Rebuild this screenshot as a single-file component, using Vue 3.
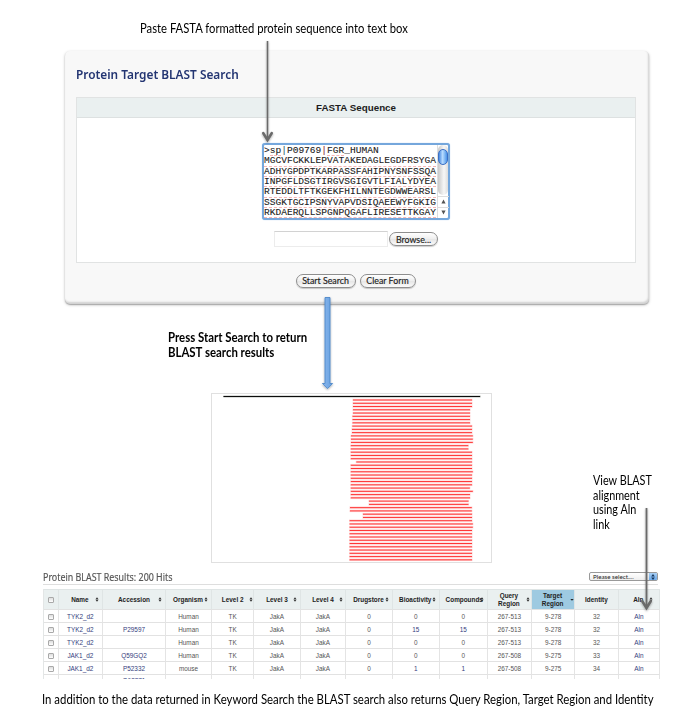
<script setup>
const sequence = [
  'MGCVFCKKLEPVATAKEDAGLEGDFRSYGA',
  'ADHYGPDPTKARPASSFAHIPNYSNFSSQA',
  'INPGFLDSGTIRGVSGIGVTLFIALYDYEA',
  'RTEDDLTFTKGEKFHILNNTEGDWWEARSL',
  'SSGKTGCIPSNYVAPVDSIQAEEWYFGKIG',
  'RKDAERQLLSPGNPQGAFLIRESETTKGAY',
]

// Runs of equal alignments: [count, start, end] in chart pixels
const runs = [
  [3, 142, 261], [2, 142, 259], [3, 141.5, 259], [1, 141.3, 261], [2, 141, 261],
  [3, 140, 261.8], [2, 139.8, 257.3], [3, 139.8, 261], [1, 145.3, 261],
  [2, 139.8, 261], [1, 139.8, 261.8], [4, 139.8, 261], [1, 139.8, 258.8],
  [1, 139.8, 261.8], [2, 139.8, 259], [2, 158, 257.5], [2, 139, 260.8],
  [2, 152, 261], [1, 138.6, 261], [2, 138.6, 261.8], [10, 138.6, 261],
]
const hits = runs
  .flatMap(([n, a, b]) => Array.from({ length: n }, () => ({ a, b })))
  .map((h, i) => ({ ...h, y: 7 + i * 3.262 }))

const columns = [
  { t: 'Name', s: 1 }, { t: 'Accession', s: 1 }, { t: 'Organism', s: 1, tight: 1 },
  { t: 'Level 2', s: 1 }, { t: 'Level 3', s: 1 }, { t: 'Level 4', s: 1 },
  { t: 'Drugstore', s: 1, tight: 1 }, { t: 'Bioactivity', s: 1, tight: 1 },
  { t: 'Compounds', s: 1, over: 1 }, { t: 'Query Region', s: 1 },
  { t: 'Target Region', s: 1, active: 1 }, { t: 'Identity' }, { t: 'Aln', s: 1 },
]
const links = [0, 1, 12]
const rows = [
  ['TYK2_d2', '', 'Human', 'TK', 'JakA', 'JakA', '0', '0', '0', '267-513', '9-278', '32', 'Aln'],
  ['TYK2_d2', 'P29597', 'Human', 'TK', 'JakA', 'JakA', '0', '15', '15', '267-513', '9-278', '32', 'Aln'],
  ['TYK2_d2', '', 'Human', 'TK', 'JakA', 'JakA', '0', '0', '0', '267-513', '9-278', '32', 'Aln'],
  ['JAK1_d2', 'Q59GQ2', 'Human', 'TK', 'JakA', 'JakA', '0', '0', '0', '267-508', '9-275', '33', 'Aln'],
  ['JAK1_d2', 'P52332', 'mouse', 'TK', 'JakA', 'JakA', '0', '1', '1', '267-508', '9-275', '34', 'Aln'],
  ['', 'Q62371', '', '', '', '', '', '', '', '', '', '', ''],
]
const isLink = (c, v) => links.includes(c) || ((c === 7 || c === 8) && v !== '0')
</script>

<template>
  <main class="page">
    <p class="note top-note"><span>Paste FASTA formatted protein sequence into text box</span></p>

    <section class="panel">
      <h1><span>Protein Target BLAST Search</span></h1>
      <div class="form-box">
        <div class="form-head">FASTA Sequence</div>
        <div class="form-body">
          <div class="textarea">
            <div class="lines">
              <div class="line"><span>&gt;<u>sp</u></span><i class="bar teal">|</i><span>P09769</span><i class="bar red">|</i><span><u>FGR</u>_HUMAN</span></div>
              <div v-for="s in sequence" :key="s" class="line"><u>{{ s }}</u></div>
            </div>
            <div class="scroll">
              <div class="track"><div class="thumb"></div></div>
              <svg class="steps" viewBox="0 0 11 22">
                <path d="M0 .5H11M0 11.5H11" stroke="#ddd" />
                <path d="M5.5 3.6 7.6 7.6H3.4ZM5.5 18.4 7.6 14.4H3.4Z" fill="#555" />
              </svg>
            </div>
          </div>
          <div class="file-row">
            <div class="file-field"></div>
            <button class="btn browse">Browse...</button>
          </div>
        </div>
      </div>
      <div class="actions">
        <button class="btn start">Start Search</button>
        <button class="btn clear">Clear Form</button>
      </div>
    </section>

    <p class="note press-note"><span>Press Start Search to return</span><span>BLAST search results</span></p>

    <div class="chart">
      <svg viewBox="0 0 281 170">
        <rect x="12" y="2.5" width="258" height="2" rx="1" fill="#b9bdb9" />
        <rect x="12.5" y="3" width="256.5" height="1" fill="#0c0c0c" />
        <g v-for="(h, i) in hits" :key="i">
          <rect :x="h.a - 0.6" :y="h.y - 1.2" :width="h.b - h.a + 1.2" height="2.4" fill="#ff4a4a" opacity=".22" />
          <rect :x="h.a" :y="h.y - 0.5" :width="h.b - h.a" height="1" fill="#ff3434" />
        </g>
      </svg>
    </div>

    <p class="note view-note"><span>View BLAST<br />alignment<br />using Aln<br />link</span></p>

    <section class="results">
      <header>
        <h2><span>Protein BLAST Results: 200 Hits</span></h2>
        <div class="select"><span>Please select....</span>
          <svg viewBox="0 0 8 8"><path d="M4 1 5.8 3.4H2.2ZM4 7 5.8 4.6H2.2Z" fill="#16365c" /></svg>
        </div>
      </header>
      <div class="table">
        <div class="tr head">
          <div class="td"><i class="check"></i></div>
          <div v-for="c in columns" :key="c.t" class="td" :class="{ sorted: c.active, tight: c.tight, over: c.over, plain: !c.s }">
            <span class="label">{{ c.t }}</span>
            <svg v-if="c.s" class="sort" viewBox="0 0 4 6">
              <path v-if="c.active" d="M0 2.4H4L2 4.6Z" fill="#222" />
              <path v-else d="M2 .4 3.8 2.7H.2ZM2 5.6 3.8 3.3H.2Z" fill="#333" />
            </svg>
          </div>
        </div>
        <div v-for="(r, i) in rows" :key="i" class="tr" :class="{ partial: !r[0] }">
          <div class="td"><i v-if="r[0]" class="check"></i></div>
          <div v-for="(v, c) in r" :key="c" class="td" :class="{ link: isLink(c, v) }">{{ v }}</div>
        </div>
      </div>
    </section>

    <p class="note bottom-note"><span>In addition to the data returned in Keyword Search the BLAST search also returns Query Region, Target Region and Identity</span></p>

    <svg class="arrows" viewBox="0 0 700 720">
      <defs>
        <filter id="soft" x="-200%" y="-10%" width="500%" height="120%">
          <feDropShadow dx="0" dy="1" stdDeviation="1" flood-opacity=".35" />
        </filter>
        <linearGradient id="blue"><stop offset="0" stop-color="#8ab8ee" /><stop offset="1" stop-color="#669fdf" /></linearGradient>
      </defs>
      <g fill="none" stroke="#6a6a6a" filter="url(#soft)">
        <path d="M267.5 41V139" stroke-width="1.6" />
        <path d="M263.3 133.2 267.5 140 271.7 133.2" stroke-width="2.6" stroke-linecap="round" />
        <path d="M646.5 508V607" stroke-width="1.8" />
        <path d="M642.3 601.2 646.5 608 650.7 601.2" stroke-width="2.6" stroke-linecap="round" />
      </g>
      <path d="M325 297.5H330V383.5H332.6L327.5 388.6 322.4 383.5H325Z" fill="url(#blue)" stroke="#4f88c8" stroke-width=".9" filter="url(#soft)" />
    </svg>
  </main>
</template>

<style>
body { margin: 0; background: #fff; }
</style>

<style scoped>
* { box-sizing: border-box; }
.page { position: relative; width: 700px; height: 720px; overflow: hidden; background: #fff; display: flex; flex-direction: column; font-family: "Liberation Sans", sans-serif; }
.note, h1, h2 { margin: 0; font-weight: 400; white-space: nowrap; }
.note { color: #000; font-family: Lato, sans-serif; font-size: 12.6px; line-height: 14.5px; }
.note span, h1 span, h2 span { display: inline-block; transform-origin: 0 50%; }
.top-note { height: 51px; padding: 22px 0 0 140px; }
.top-note span { transform: scaleX(.894); }
.panel { width: 584px; height: 253px; margin-left: 65px; padding: 14px 12px 0 11px; background: #f8f8f8; border-radius: 5px; box-shadow: 0 1px 3px rgba(0,0,0,.25), inset -1px -2px 2px rgba(0,0,0,.16), 0 1px 1px rgba(0,0,0,.2); }
h1 { height: 32px; font: 600 12.4px/20px "Noto Sans", "Open Sans", sans-serif; color: #233572; }
h1 span { transform: scaleX(.957); }
.form-box { width: 560px; height: 166px; border: 1px solid #e1e3e3; background: #fff; }
.form-head { height: 20px; background: #eaf0f0; border-bottom: 1px solid #dde1e1; text-align: center; font-size: 9.8px; font-weight: 700; line-height: 20px; color: #1c1c1c; }
.form-body { padding: 25px 0 0 185px; }
.textarea { width: 188px; height: 77px; display: flex; border: 2px solid #75a7dc; border-radius: 3px; box-shadow: 0 0 1px #8db9e6; background: #fff; }
.lines { width: 173px; padding-top: 1px; font: 9.56px/10.35px "Liberation Mono", monospace; color: #222; -webkit-text-stroke: .1px #222; }
.line { height: 10.35px; white-space: pre; }
.line u { display: inline-block; height: 10.3px; text-decoration: none; border-bottom: 1px dashed rgba(240,110,110,.5); }
.bar { font-style: normal; }
.bar.teal { color: #39808a; }
.bar.red { color: #a13b4c; }
.scroll { width: 11px; display: flex; flex-direction: column; justify-content: space-between; border-left: 1px solid #ddd; }
.track { height: 50px; padding-top: 4px; border-radius: 5px; background: linear-gradient(90deg, #c9c9c9, #f7f7f7 60%, #ddd); }
.thumb { width: 10px; height: 16px; border-radius: 5px; border: 1px solid #3b6fc4; background: linear-gradient(90deg, #4a8ae0, #b8dcff 45%, #4b94e8); }
.steps { width: 11px; height: 22px; }
.file-row { display: flex; align-items: center; margin: 11px 0 0 12px; gap: 1px; }
.file-field { width: 114px; height: 16px; border: 1px solid #ececec; border-top-color: #d2d2d2; background: #fff; }
.btn { height: 14px; padding: 0; border: 1px solid #8e8e8e; border-radius: 7px; background: linear-gradient(#fff, #eee 50%, #e6e6e6 52%, #fbfbfb); box-shadow: 0 1px 1px rgba(0,0,0,.2); font: 8.8px/11px Lato, "Open Sans", sans-serif; color: #222; white-space: nowrap; -webkit-text-stroke: .15px #222; }
.browse { width: 49px; }
.actions { display: flex; gap: 4px; padding: 10.5px 0 0 219.5px; }
.start { width: 60px; }
.clear { width: 56px; }
.press-note { height: 89px; padding: 27px 0 0 168px; font-weight: 700; }
.press-note span { display: block; width: max-content; transform: scaleX(.906); }
.chart { width: 281px; height: 170px; margin-left: 211px; border: 1px solid #e0e0e0; }
.chart svg { display: block; width: 281px; height: 170px; margin: -1px; }
.view-note { height: 64px; margin-top: -89px; margin-left: 593px; }
.view-note span { transform: scaleX(.86); }
.results { width: 617px; height: 108px; margin: 33px 0 0 43px; overflow: hidden; }
header { display: flex; justify-content: space-between; height: 14px; border-bottom: 1px solid #dedede; margin-right: 2px; }
h2 { width: 140px; font: 9.9px/13px "Noto Sans", sans-serif; color: #555; }
h2 span { transform: scaleX(.9); -webkit-text-stroke: .15px #555; }
.select { width: 69px; height: 9px; margin-top: 1px; display: flex; justify-content: space-between; border: 1px solid #999; border-radius: 2px; background: linear-gradient(#fff, #eee); font: 6.2px/7px Lato, sans-serif; color: #222; padding-left: 3px; overflow: hidden; }
.select svg { width: 8px; height: 8px; background: linear-gradient(#a9d0f5, #63a4e8); }
.table { margin-top: 4px; border-left: 1px solid #e3e6e6; font-size: 6.4px; color: #555; }
.tr { display: grid; grid-template-columns: 14.5px 44.7px 62.6px 46.4px 42px 46.6px 45.4px 46.6px 47px 48px 44.4px 43px 43.6px 41.2px; height: 13.05px; }
.td { display: flex; align-items: center; justify-content: center; border-right: 1px solid #e4e4e4; border-bottom: 1px solid #e2e2e2; min-width: 0; line-height: 8px; padding-top: 1px; }
.partial .td { align-items: flex-start; padding-top: 2px; line-height: 7px; }
.head { height: 21px; background: #eaf0f0; color: #222; font-weight: 700; }
.head .td { border-right-color: #dfe5e5; border-top: 1px solid #dfe5e5; text-align: center; gap: 6px; padding-left: 9px; line-height: 7.4px; padding-top: 0; }
.head .td:first-child { padding-left: 0; }
.head .td:nth-child(3) { gap: 8px; padding-left: 12px; }
.head .tight { gap: 1px; padding-left: 4px; }
.head .over { gap: 0; padding-left: 3px; }
.over .sort { margin-left: -3px; }
.head .plain { padding-left: 0; }
.head .sorted { background: #9ecae1; }
.head .td:nth-child(5), .head .td:nth-child(6), .head .td:nth-child(7) { gap: 5px; }
.label { max-width: 40px; white-space: nowrap; }
.td:nth-child(11) .label, .td:nth-child(12) .label { width: 23px; white-space: normal; }
.sort { width: 4px; height: 5px; flex: none; }
.link { color: #34407c; }
.check { width: 6px; height: 6px; border: 1px solid #a9a9a9; border-radius: 1px; background: linear-gradient(#ddd, #fff); }
.bottom-note { padding: 14px 0 0 42px; }
.bottom-note span { transform: scaleX(.903); }
.arrows { position: absolute; left: 0; top: 0; width: 700px; height: 720px; pointer-events: none; }
</style>
